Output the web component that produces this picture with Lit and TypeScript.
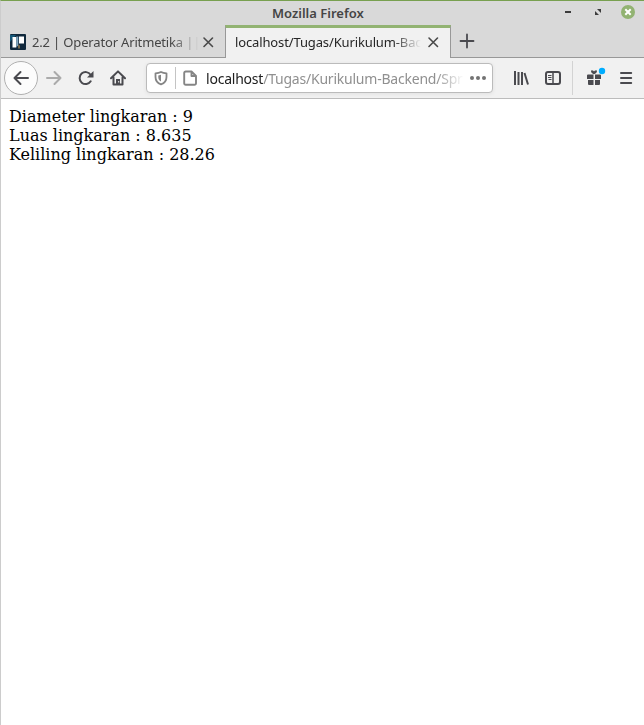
import { LitElement, html, css, svg } from "lit";
import { customElement } from "lit/decorators.js";

const icon = (cls: string, body: unknown, size = 16) =>
  html`<svg class="icon ${cls}" width=${size} height=${size} viewBox="0 0 ${size} ${size}" fill="none" stroke="currentColor">${body}</svg>`;

const close = () => icon("", svg`<path d="M4 4l8.500 8.500M12.500 4L4 12.500" stroke="#4a4a4a" stroke-width="1.6" stroke-linecap="round"/>`);

@customElement("app-root")
export class AppRoot extends LitElement {
  static styles = css`
    :host {
      display: flex;
      flex-direction: column;
      box-sizing: border-box;
      height: 725px;
      width: 644px;
      overflow: hidden;
      background: #fff;
      border-left: 1px solid #cccccc;
      border-top: 1px solid #78a050;
      font-family: "Noto Sans", "Open Sans", sans-serif;
      color: #4a4a4f;
    }
    svg { display: block; flex: none; }
    .title {
      position: relative;
      height: 24px;
      flex: none;
      background: #d9d9d9;
      display: flex;
      align-items: center;
      justify-content: flex-end;
      box-sizing: border-box;
      padding-right: 9px;
    }
    .name {
      position: absolute;
      left: 271px;
      top: 3px;
      font: 600 13px/18px "Noto Sans", sans-serif;
      color: #454545;
      white-space: nowrap;
    }
    .controls { display: flex; gap: 16px; align-items: center; color: #3c3c3c; margin-top: -2px; }
    .tabs { display: flex; height: 33px; flex: none; background: #d9d9d9; }
    .tab {
      display: flex;
      align-items: center;
      box-sizing: border-box;
      flex: none;
      width: 224px;
      padding: 1px 9px 0 9px;
      border-bottom: 1px solid #989898;
      font-size: 13px;
      color: #454545;
    }
    .tab.active {
      width: 226px;
      background: #f1f1f1;
      border: solid #989898;
      border-width: 0 1px;
      border-top: 3px solid #92b372;
      padding: 0 9px 3px 9px;
      color: #262626;
    }
    .label {
      flex: 1;
      min-width: 0;
      white-space: nowrap;
      line-height: 20px;
      margin-right: 4px;
      -webkit-mask-image: linear-gradient(to left, transparent, #000 28px);
      mask-image: linear-gradient(to left, transparent, #000 28px);
    }
    .l1 { margin-left: 6px; margin-right: 1px; letter-spacing: -0.16px; }
    .tab:not(.active) { padding-right: 9px; }
    .l2 { letter-spacing: -0.13px; }
    .rest { flex: 1; border-bottom: 1px solid #989898; padding: 8px 0 0 8px; }
    .nav {
      display: flex;
      align-items: center;
      box-sizing: border-box;
      height: 41px;
      flex: none;
      background: #f1f1f1;
      border-bottom: 1px solid #bcbcbc;
      padding-left: 3px;
    }
    .back {
      width: 34px;
      height: 34px;
      box-sizing: border-box;
      border: 1px solid #b0b0b0;
      border-radius: 50%;
      background: #fcfcfc;
      display: grid;
      place-items: center;
    }
    .fwd { color: #ababab; margin-left: 8px; }
    .reload, .home { margin-left: 16px; }
    .url {
      display: flex;
      align-items: center;
      box-sizing: border-box;
      width: 347px;
      height: 30px;
      margin-left: 20px;
      padding: 0 6px;
      border: 1px solid #bbb;
      border-radius: 4px;
      background: #fff;
      box-shadow: 0 1px 4px rgba(0, 0, 0, 0.07);
      color: #858585;
    }
    .url svg { margin-left: 0; }
    .bar { width: 1px; height: 22px; background: #c4c4c4; margin: 0 6px; }
    .addr {
      flex: 1;
      min-width: 0;
      margin-left: 8px;
      margin-right: 6px;
      padding-top: 2px;
      white-space: nowrap;
      font-size: 14px;
      line-height: 22px;
      color: #909090;
      letter-spacing: -0.22px;
      -webkit-mask-image: linear-gradient(to left, transparent, #000 28px);
      mask-image: linear-gradient(to left, transparent, #000 28px);
    }
    .addr b { font-weight: 400; color: #202020; }
    .lib { margin-left: 20px; }
    .side { margin-left: 16px; }
    .split { width: 1px; height: 34px; background: #d3d3d3; margin: 0 13px 0 11px; }
    .menu { margin-left: 12px; }
    .page { padding: 8px; font: 16px/19px "DejaVu Serif", serif; color: #000; }
  `;

  render() {
    return html`
      <div class="title">
        <span class="name">Mozilla Firefox</span>
        <div class="controls">
          ${icon("", svg`<path d="M4 7h6" stroke-width="2"/>`, 14)}
          ${icon("", svg`<path d="M6 4h4v4zM4 6v4h4z" fill="currentColor" stroke="none"/>`, 14)}
          ${icon("", svg`<circle cx="7" cy="7" r="7" fill="#92b372" stroke="none"/><path d="M4.300 4.300l5.400 5.400M9.700 4.300L4.300 9.700" stroke="#fff" stroke-width="2"/>`, 14)}
        </div>
      </div>
      <div class="tabs">
        <div class="tab">
          ${icon("", svg`<rect width="16" height="16" rx="1" fill="#10283c" stroke="none"/><path d="M0 1h6L0 8z" fill="#155778" stroke="none"/><path d="M2.500 3h3.800v10.500H2.500zM9 2.500h5v7H9z" fill="#fff" stroke="none"/><path d="M6.300 2.500h2v9l-2 1.500z" fill="#83a9c2" stroke="none"/><path d="M8 10.500l2 1v3H8z" fill="#77684c" stroke="none"/>`)}
          <span class="label l1">2.2 | Operator Aritmetika ||</span>
          ${close()}
        </div>
        <div class="tab active">
          <span class="label l2">localhost/Tugas/Kurikulum-Bac</span>
          ${close()}
        </div>
        <div class="rest">${icon("", svg`<path d="M8 1.500v13M1.500 8h13" stroke-width="1.800" stroke-linecap="round"/>`)}</div>
      </div>
      <div class="nav">
        <div class="back">${icon("", svg`<path d="M15 8H1.500M7.500 2L1.500 8l6 6" stroke-width="2" stroke-linecap="round" stroke-linejoin="round"/>`)}</div>
        ${icon("fwd", svg`<path d="M1 8h13.500M8.500 2l6 6-6 6" stroke-width="2" stroke-linecap="round" stroke-linejoin="round"/>`)}
        ${icon("reload", svg`<path d="M12.700 11.300A6 6 0 1 1 12.600 4.700" stroke-width="2" stroke-linecap="round"/><path d="M15.500 1v6.500H9z" fill="currentColor" stroke="none"/>`)}
        ${icon("home", svg`<path d="M1 8.300L8 1.400l7 6.900M3.500 7.500V14.500h9V7.500" stroke-width="2" stroke-linecap="round" stroke-linejoin="round"/><path d="M6 14V9h4v5z" fill="currentColor" stroke="none"/><path d="M8.700 11v1.500" stroke="#f1f1f1"/>`)}
        <div class="url">
          ${icon("", svg`<path d="M8 2C6 3 4 3.200 2.500 3.300V7c0 4 2.500 6.400 5.500 7.400 3-1 5.500-3.400 5.500-7.400V3.300C12 3.200 10 3 8 2z" stroke-width="1.800" stroke-linejoin="round"/><path d="M8 4.800v6.800C6.200 10.500 5.300 9 5.300 7V5.400z" fill="currentColor" stroke="none"/>`)}
          <span class="bar"></span>
          ${icon("", svg`<path d="M3.700 1.500H9.500L14 6v7.200a1.500 1.500 0 0 1-1.500 1.500H3.700a1.500 1.500 0 0 1-1.500-1.500V3a1.500 1.500 0 0 1 1.500-1.500zM9.500 1.800V6H14" stroke-width="1.900" stroke-linejoin="round"/>`)}
          <span class="addr"><b>localhost</b>/Tugas/Kurikulum-Backend/Spr</span>
          ${icon("", svg`<g fill="#737373" stroke="none"><circle cx="2" cy="8" r="2"/><circle cx="8" cy="8" r="2"/><circle cx="14" cy="8" r="2"/></g>`)}
        </div>
        ${icon("lib", svg`<path d="M2 1v14M5.500 2v13M9 2v13M11.500 3l3.500 11.500" stroke-width="2"/>`)}
        ${icon("side", svg`<rect x="1" y="2" width="14" height="12" rx="2" stroke-width="2"/><path d="M8 3v10" stroke-width="1.500"/><path d="M3 5.500h3.500M3 7.500h3.500M3.500 9.500h3" stroke-width="1"/>`)}
        <span class="split"></span>
        <svg class="icon" width="20" height="24" viewBox="0 0 20 24">
          <path d="M2 8.500h5.500V13H1V9.500a1 1 0 0 1 1-1zM9 8.500h5a1 1 0 0 1 1 1V13H9zM2 14h5.500v5H3a1 1 0 0 1-1-1zM9 14h5v4a1 1 0 0 1-1 1H9zM8 8.200C4.500 7 4.500 4.200 6 4.200c1 0 2 1.200 2 1.200s1-1.200 2-1.200c1.500 0 1.500 2.800-2 4z" fill="#4a4a4f"/>
          <circle cx="16" cy="5" r="3.200" fill="#00adff"/>
        </svg>
        ${icon("menu", svg`<path d="M3 3h10.200M3 8h10.200M3 13h10.200" stroke-width="2" stroke-linecap="round"/>`)}
      </div>
      <main class="page">
        <div>Diameter lingkaran : 9</div>
        <div>Luas lingkaran : 8.635</div>
        <div>Keliling lingkaran : 28.26</div>
      </main>
    `;
  }
}
